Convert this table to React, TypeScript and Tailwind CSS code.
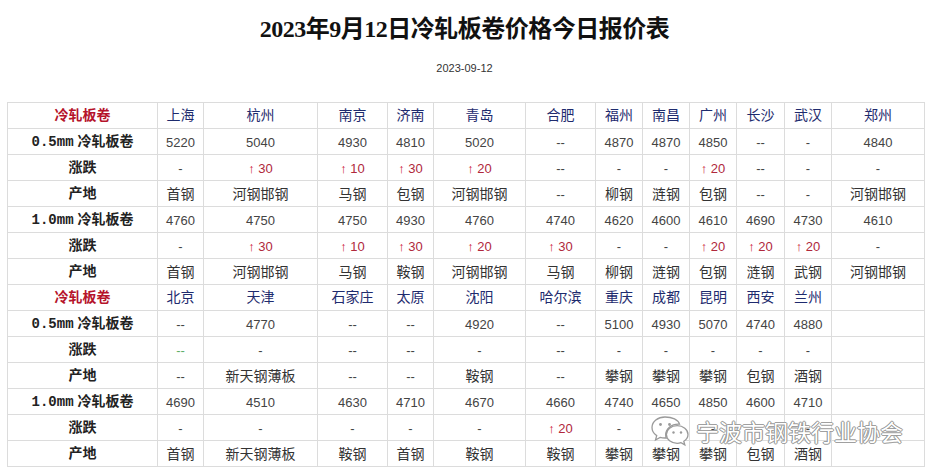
import React from 'react';

type Block = {
  cities: string[];
  rows: { label: React.ReactNode; cells: string[]; kind: 'price' | 'change' | 'origin' }[];
};

const colWidths = [150, 46, 114, 70, 46, 92, 70, 47, 47, 47, 48, 47, 93];

const thin = (mm: string) => (
  <span>
    <span className="font-['Liberation_Mono',monospace]">{mm}</span> 冷轧板卷
  </span>
);

const blocks: Block[] = [
  {
    cities: ['上海', '杭州', '南京', '济南', '青岛', '合肥', '福州', '南昌', '广州', '长沙', '武汉', '郑州'],
    rows: [
      { label: thin('0.5mm'), kind: 'price', cells: ['5220', '5040', '4930', '4810', '5020', '--', '4870', '4870', '4850', '--', '-', '4840'] },
      { label: '涨跌', kind: 'change', cells: ['-', '↑30', '↑10', '↑30', '↑20', '--', '-', '-', '↑20', '--', '-', '-'] },
      { label: '产地', kind: 'origin', cells: ['首钢', '河钢邯钢', '马钢', '包钢', '河钢邯钢', '--', '柳钢', '涟钢', '包钢', '--', '-', '河钢邯钢'] },
      { label: thin('1.0mm'), kind: 'price', cells: ['4760', '4750', '4750', '4930', '4760', '4740', '4620', '4600', '4610', '4690', '4730', '4610'] },
      { label: '涨跌', kind: 'change', cells: ['-', '↑30', '↑10', '↑30', '↑20', '↑30', '-', '-', '↑20', '↑20', '↑20', '-'] },
      { label: '产地', kind: 'origin', cells: ['首钢', '河钢邯钢', '马钢', '鞍钢', '河钢邯钢', '马钢', '柳钢', '涟钢', '包钢', '涟钢', '武钢', '河钢邯钢'] },
    ],
  },
  {
    cities: ['北京', '天津', '石家庄', '太原', '沈阳', '哈尔滨', '重庆', '成都', '昆明', '西安', '兰州', ''],
    rows: [
      { label: thin('0.5mm'), kind: 'price', cells: ['--', '4770', '--', '--', '4920', '--', '5100', '4930', '5070', '4740', '4880', ''] },
      { label: '涨跌', kind: 'change', cells: ['g--', '-', '--', '--', '-', '--', '-', '-', '-', '-', '-', ''] },
      { label: '产地', kind: 'origin', cells: ['--', '新天钢薄板', '--', '--', '鞍钢', '--', '攀钢', '攀钢', '攀钢', '包钢', '酒钢', ''] },
      { label: thin('1.0mm'), kind: 'price', cells: ['4690', '4510', '4630', '4710', '4670', '4660', '4740', '4650', '4850', '4600', '4710', ''] },
      { label: '涨跌', kind: 'change', cells: ['-', '-', '-', '-', '-', '↑20', '-', '-', '-', '-', '-', ''] },
      { label: '产地', kind: 'origin', cells: ['首钢', '新天钢薄板', '鞍钢', '首钢', '鞍钢', '鞍钢', '攀钢', '攀钢', '攀钢', '包钢', '酒钢', ''] },
    ],
  },
];

function Cell({ value, kind }: { value: string; kind: string }) {
  if (value.startsWith('↑')) {
    return (
      <span className="text-[13px] text-[#b0283c]">
        <span className="text-[#c8102e]">↑</span> {value.slice(1)}
      </span>
    );
  }
  if (value === 'g--') {
    return <span className="text-[13px] text-[#5fae6a]">--</span>;
  }
  if (kind === 'origin' && value.length > 1 && value !== '--') {
    return <span className="text-[14px] text-[#333]">{value}</span>;
  }
  return <span className="text-[13px] text-[#444]">{value}</span>;
}

function WeChatMark() {
  return (
    <svg width="40" height="34" viewBox="0 0 40 34" fill="white" stroke="#9a9a9a" strokeWidth="1.3">
      <path d="M15 3C7.8 3 2 7.7 2 13.5c0 3.3 1.8 6.2 4.7 8.1L5.5 26l4.6-2.6c1.5.4 3.1.6 4.9.6.4 0 .8 0 1.2 0-.3-1-.5-2-.5-3.1 0-6 5.6-10.8 12.6-10.8.4 0 .8 0 1.2.1C28.3 5.7 22.2 3 15 3z" />
      <path d="M38 20.5c0-4.9-4.9-8.8-10.8-8.8S16.4 15.6 16.4 20.5s4.9 8.8 10.8 8.8c1.3 0 2.6-.2 3.8-.6l3.8 2.1-1-3.5c2.5-1.6 4.2-4 4.2-6.8z" />
      <circle cx="10.5" cy="10.5" r="1.4" fill="#9a9a9a" stroke="none" />
      <circle cx="19.5" cy="10.5" r="1.4" fill="#9a9a9a" stroke="none" />
      <circle cx="23.5" cy="18.5" r="1.2" fill="#9a9a9a" stroke="none" />
      <circle cx="31" cy="18.5" r="1.2" fill="#9a9a9a" stroke="none" />
    </svg>
  );
}

export default function App() {
  return (
    <div className="relative w-[929px] h-[471px] overflow-hidden bg-white font-['Liberation_Sans','Noto_Sans_CJK_SC',sans-serif]">
      <div className="flex flex-col items-center">
        <h1 className="mt-[14px] h-[30px] leading-[30px] text-[24px] font-bold text-[#111] font-['Liberation_Serif','Noto_Sans_CJK_SC',serif] tracking-[-0.5px]">
          2023年9月12日冷轧板卷价格今日报价表
        </h1>
        <div className="mt-[17px] h-[14px] leading-[14px] text-[11px] text-[#333]">2023-09-12</div>
      </div>

      <table className="mt-[27px] ml-[7px] w-[917px] table-fixed border-collapse text-center">
        <colgroup>
          {colWidths.map((w, i) => (
            <col key={i} style={{ width: w }} />
          ))}
        </colgroup>
        <tbody>
          {blocks.map((b, bi) => (
            <React.Fragment key={bi}>
              <tr className="h-[26px]">
                <td className="border border-[#dcdcdc] p-0 text-[14px] font-bold text-[#b5132b]">冷轧板卷</td>
                {b.cities.map((c, i) => (
                  <td key={i} className="border border-[#dcdcdc] p-0 text-[14px] text-[#1e2b6e] whitespace-nowrap">
                    {c}
                  </td>
                ))}
              </tr>
              {b.rows.map((r, ri) => (
                <tr key={ri} className="h-[26px]">
                  <td className="border border-[#dcdcdc] p-0 text-[14px] font-bold text-[#222] whitespace-nowrap">{r.label}</td>
                  {r.cells.map((v, i) => (
                    <td key={i} className="border border-[#dcdcdc] p-0 whitespace-nowrap">
                      <Cell value={v} kind={r.kind} />
                    </td>
                  ))}
                </tr>
              ))}
            </React.Fragment>
          ))}
        </tbody>
      </table>

      <div className="absolute left-[650px] top-[414px] flex items-center gap-[6px]">
        <WeChatMark />
        <span className="text-[23px] leading-[30px] text-white font-['Noto_Sans_CJK_SC',sans-serif] [text-shadow:0_0_1px_#777,0_0_1px_#777,1px_0_0_#aaa,-1px_0_0_#aaa,0_1px_0_#aaa,0_-1px_0_#aaa]">
          宁波市钢铁行业协会
        </span>
      </div>
    </div>
  );
}
